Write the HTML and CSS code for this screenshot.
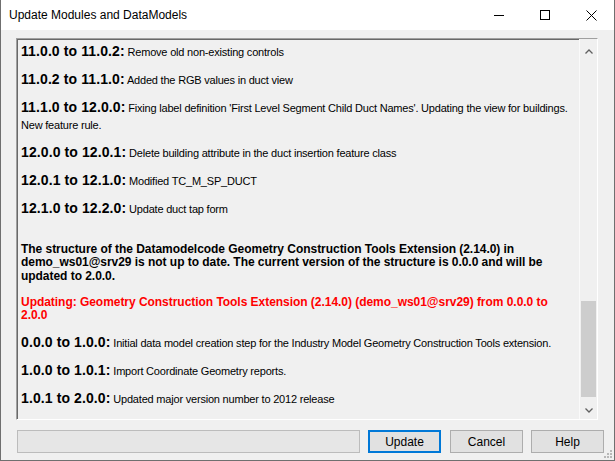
FILE: index.html
```html
<!DOCTYPE html>
<html lang="en">
<head>
  <meta charset="UTF-8">
  <title>Update Modules and DataModels</title>
  <link rel="stylesheet" href="styles.css">
</head>
<body>
  <div class="window">
    <div class="titlebar">
      <div class="title">Update Modules and DataModels</div>
      <div class="caption-btns">
        <div class="cap-btn">
          <svg width="10" height="10" viewBox="0 0 10 10"><path d="M0 5.5H10" stroke="#000" stroke-width="1"/></svg>
        </div>
        <div class="cap-btn">
          <svg width="10" height="10" viewBox="0 0 10 10"><rect x="0.5" y="0.5" width="9" height="9" fill="none" stroke="#000" stroke-width="1"/></svg>
        </div>
        <div class="cap-btn">
          <svg width="11" height="11" viewBox="0 0 11 11"><path d="M0.5 0.5L10.5 10.5M10.5 0.5L0.5 10.5" stroke="#000" stroke-width="1"/></svg>
        </div>
      </div>
    </div>

    <div class="content">
      <div class="textbox">
        <div class="log">
          <div class="entry"><span class="ver">11.0.0 to 11.0.2:</span> Remove old non-existing controls</div>
          <div class="entry"><span class="ver">11.0.2 to 11.1.0:</span> Added the RGB values in duct view</div>
          <div class="entry"><span class="ver">11.1.0 to 12.0.0:</span> Fixing label definition 'First Level Segment Child Duct Names'. Updating the view for buildings. New feature rule.</div>
          <div class="entry"><span class="ver">12.0.0 to 12.0.1:</span> Delete building attribute in the duct insertion feature class</div>
          <div class="entry"><span class="ver">12.0.1 to 12.1.0:</span> Modified TC_M_SP_DUCT</div>
          <div class="entry"><span class="ver">12.1.0 to 12.2.0:</span> Update duct tap form</div>
          <div class="notice">The structure of the Datamodelcode Geometry Construction Tools Extension (2.14.0) in demo_ws01@srv29 is not up to date. The current version of the structure is 0.0.0 and will be updated to 2.0.0.</div>
          <div class="notice red">Updating: Geometry Construction Tools Extension (2.14.0) (demo_ws01@srv29) from 0.0.0 to 2.0.0</div>
          <div class="entry"><span class="ver">0.0.0 to 1.0.0:</span> Initial data model creation step for the Industry Model Geometry Construction Tools extension.</div>
          <div class="entry"><span class="ver">1.0.0 to 1.0.1:</span> Import Coordinate Geometry reports.</div>
          <div class="entry"><span class="ver">1.0.1 to 2.0.0:</span> Updated major version number to 2012 release</div>
        </div>
        <div class="scrollbar">
          <div class="arrow up">
            <svg width="8" height="5" viewBox="0 0 8 5"><path d="M0.5 4.5L4 1L7.5 4.5" fill="none" stroke="#606060" stroke-width="1.3"/></svg>
          </div>
          <div class="track">
            <div class="thumb"></div>
          </div>
          <div class="arrow">
            <svg width="8" height="5" viewBox="0 0 8 5"><path d="M0.5 0.5L4 4L7.5 0.5" fill="none" stroke="#606060" stroke-width="1.3"/></svg>
          </div>
        </div>
      </div>

      <div class="footer">
        <div class="progress"></div>
        <div class="btn default">Update</div>
        <div class="btn">Cancel</div>
        <div class="btn">Help</div>
      </div>
    </div>

    <svg class="grip" width="8" height="8" viewBox="0 0 8 8">
      <rect x="6" y="0" width="2" height="2" fill="#b8b8b8"/>
      <rect x="3" y="3" width="2" height="2" fill="#b8b8b8"/>
      <rect x="6" y="3" width="2" height="2" fill="#b8b8b8"/>
      <rect x="0" y="6" width="2" height="2" fill="#b8b8b8"/>
      <rect x="3" y="6" width="2" height="2" fill="#b8b8b8"/>
      <rect x="6" y="6" width="2" height="2" fill="#b8b8b8"/>
    </svg>
  </div>
</body>
</html>
```

FILE: styles.css
```css
* {
  margin: 0;
  padding: 0;
  box-sizing: border-box;
}

body {
  background: #fff;
  font-family: "Liberation Sans", Arial, sans-serif;
  overflow: hidden;
}

.window {
  width: 615px;
  height: 461px;
  border: 1px solid #6f6f6f;
  border-top: none;
  background: #f0f0f0;
  position: relative;
  display: flex;
  flex-direction: column;
}

.titlebar {
  height: 30px;
  flex-shrink: 0;
  background: #fff;
  display: flex;
  align-items: center;
  justify-content: space-between;
}

.title {
  font-size: 12px;
  color: #000;
  padding-left: 8px;
}

.caption-btns {
  display: flex;
  height: 30px;
}

.cap-btn {
  width: 46px;
  display: flex;
  align-items: center;
  justify-content: center;
}

.cap-btn svg {
  display: block;
}

.content {
  flex: 1;
  display: flex;
  flex-direction: column;
  padding: 8px 10px 0 15px;
}

.textbox {
  height: 382px;
  flex-shrink: 0;
  margin-right: 6px;
  display: flex;
  border-top: 1px solid #a0a0a0;
  border-left: 1px solid #a0a0a0;
  border-right: 1px solid #fff;
  border-bottom: 1px solid #fff;
  box-shadow: inset 1px 1px 0 #696969;
  background: #f0f0f0;
}

.log {
  flex: 1;
  overflow: hidden;
  padding: 5px 8px 0 4px;
  color: #000;
}

.entry {
  font-size: 11px;
  letter-spacing: -0.2px;
  line-height: 17px;
  margin-bottom: 11px;
}

.ver {
  font-size: 14px;
  font-weight: bold;
  letter-spacing: 0.1px;
  line-height: 14px;
}

.notice {
  font-size: 12px;
  font-weight: bold;
  letter-spacing: -0.04px;
  line-height: 13.5px;
  margin: 24.5px 0 13px 0;
}

.notice.red {
  color: #ff0000;
  margin: 0 0 14px 0;
  line-height: 12.5px;
}

.scrollbar {
  width: 18px;
  display: flex;
  flex-direction: column;
  border-left: 1px solid #fafafa;
  background: #f0f0f0;
}

.arrow {
  height: 17px;
  display: flex;
  align-items: center;
  justify-content: center;
}

.arrow.up {
  height: 23px;
  padding-top: 2px;
}

.track {
  flex: 1;
  display: flex;
  flex-direction: column;
  justify-content: flex-end;
  padding: 0 1px;
}

.thumb {
  height: 96px;
  margin-bottom: 5px;
  background: #cdcdcd;
}

.footer {
  display: flex;
  align-items: center;
  margin-top: 10px;
  padding-left: 1px;
  height: 23px;
}

.progress {
  width: 343px;
  flex-shrink: 0;
  height: 23px;
  background: #e6e6e6;
  border: 1px solid #bcbcbc;
  margin-right: 8px;
}

.btn {
  width: 73px;
  flex-shrink: 0;
  height: 23px;
  margin-right: 8px;
  background: #e1e1e1;
  border: 1px solid #adadad;
  font-size: 12px;
  display: flex;
  align-items: center;
  justify-content: center;
  color: #000;
}

.btn:last-child {
  margin-right: 0;
}

.btn.default {
  border: 2px solid #0078d7;
  margin-right: 9px;
}

.grip {
  position: absolute;
  right: 2px;
  bottom: 2px;
}
```
